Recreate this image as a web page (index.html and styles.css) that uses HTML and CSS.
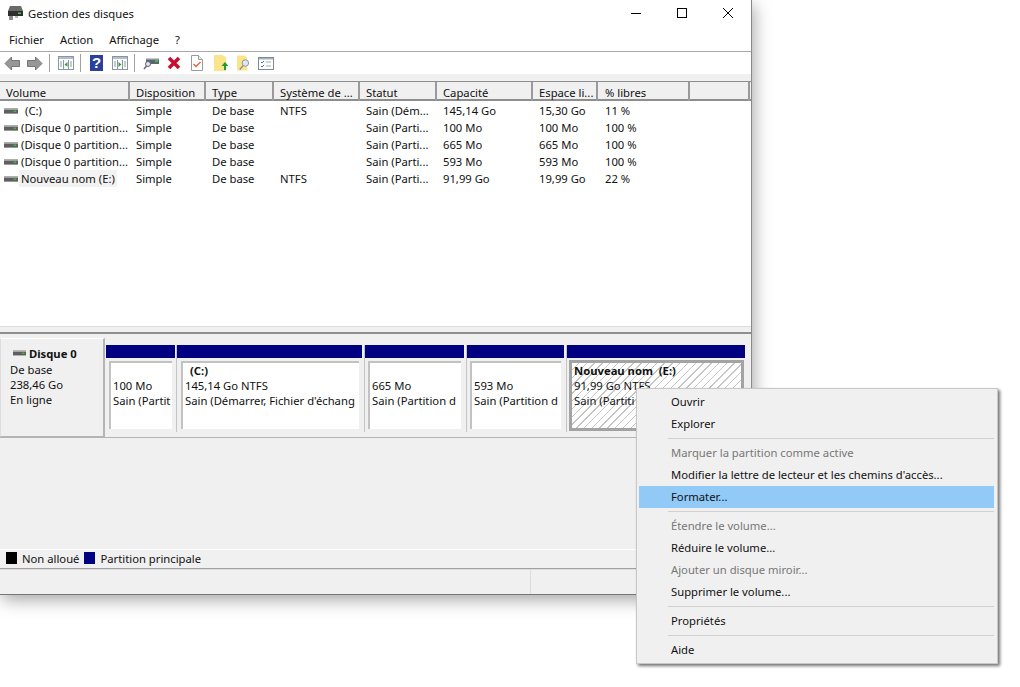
FILE: index.html
```html
<!DOCTYPE html>
<html lang="fr">
<head>
<meta charset="utf-8">
<title>Gestion des disques</title>
<link rel="stylesheet" href="styles.css">
</head>
<body>
<svg class="defs" width="0" height="0">
  <defs>
    <symbol id="drive" viewBox="0 0 16 6">
      <rect x="0" y="0" width="16" height="6" fill="#5f5f5f"/>
      <rect x="0" y="0" width="16" height="1.5" fill="#bdbdbd"/>
      <rect x="11" y="2.5" width="3" height="1.5" fill="#3fc43f"/>
    </symbol>
  </defs>
</svg>
<div class="window">
  <div class="titlebar">
    <svg class="appicon" width="17" height="16" viewBox="0 0 17 16"><path d="M3 1h11l2 5H1z" fill="#6a6a6a"/><rect x="1" y="6" width="15" height="5" fill="#2f2f2f"/><rect x="11" y="7.500" width="3" height="1.500" fill="#3fc43f"/><rect x="2" y="11" width="4" height="4" fill="#8d8d8d"/><rect x="8" y="11" width="3" height="2" fill="#b5b5b5"/></svg>
    <span class="title">Gestion des disques</span>
    <div class="winbtns">
      <svg width="46" height="28" viewBox="0 0 46 28"><path d="M18 13.500h10" stroke="#000" fill="none"/></svg>
      <svg width="46" height="28" viewBox="0 0 46 28"><rect x="18.500" y="8.500" width="9" height="9" stroke="#000" fill="none"/></svg>
      <svg width="46" height="28" viewBox="0 0 46 28"><path d="M18 8l10 10M28 8L18 18" stroke="#000" fill="none"/></svg>
    </div>
  </div>
  <div class="menubar"><span>Fichier</span><span>Action</span><span>Affichage</span><span>?</span></div>
  <div class="toolbar">
    <svg class="tool m7" width="16" height="15" viewBox="0 0 16 15"><path d="M7.500 1L1 7.500 7.500 14v-3.500h8v-6h-8z" fill="#979797" stroke="#777"/></svg>
    <svg class="tool m6" width="16" height="15" viewBox="0 0 16 15"><path d="M8.500 1L15 7.500 8.500 14v-3.500h-8v-6h8z" fill="#979797" stroke="#777"/></svg>
    <i class="tsep"></i>
    <svg class="tool m6" width="16" height="14" viewBox="0 0 16 14"><rect x=".5" y=".5" width="15" height="13" fill="#fff" stroke="#8a96a3"/><rect x="1" y="1" width="14" height="2" fill="#b5bec8"/><path d="M5.500 4v9M10.500 4v9" stroke="#8a96a3"/><path d="M9.500 6v5L6.500 8.500z" fill="#2e9e3e"/><path d="M2 6h2M2 8h2M2 10h2M12 6h2M12 8h2M12 10h2" stroke="#8a96a3"/></svg>
    <i class="tsep"></i>
    <svg class="tool m9" width="13" height="16" viewBox="0 0 13 16"><rect width="13" height="16" fill="#2b3f9e"/><text x="6.500" y="13" class="qmark">?</text></svg>
    <svg class="tool m6" width="16" height="14" viewBox="0 0 16 14"><rect x=".5" y=".5" width="15" height="13" fill="#fff" stroke="#8a96a3"/><rect x="1" y="1" width="14" height="2" fill="#b5bec8"/><path d="M5.500 4v9M10.500 4v9" stroke="#8a96a3"/><path d="M6.500 6v5l3-2.500z" fill="#2e9e3e"/><path d="M2 6h2M2 8h2M2 10h2M12 6h2M12 8h2M12 10h2" stroke="#8a96a3"/></svg>
    <i class="tsep"></i>
    <svg class="tool m8" width="16" height="14" viewBox="0 0 16 14"><rect x="3" y="2" width="13" height="6" fill="#5c6670"/><rect x="3" y="2" width="13" height="1.500" fill="#c4c9ce"/><rect x="12" y="4" width="3" height="2" fill="#37c437"/><circle cx="5" cy="8" r="2.500" fill="#dfe6ee" stroke="#667"/><path d="M3.500 10L1 13" stroke="#667" stroke-width="1.500"/></svg>
    <svg class="tool m10" width="14" height="14" viewBox="0 0 14 14"><path d="M2 2l10 10M12 2L2 12" stroke="#c8102e" stroke-width="3.600" fill="none"/></svg>
    <svg class="tool m11" width="12" height="16" viewBox="0 0 12 16"><path d="M.5.500h7l4 4v11H.5z" fill="#fff" stroke="#9a9a9a"/><path d="M7.500.500v4h4" fill="#eee" stroke="#9a9a9a"/><path d="M2.500 9l2.500 2.500L9.500 7" stroke="#e2603a" stroke-width="1.300" fill="none"/></svg>
    <svg class="tool m9" width="14" height="16" viewBox="0 0 14 16"><path d="M0 0h8l4 2v14H0z" fill="#fbe58a"/><path d="M10 15V11H7.500L11 7l3.500 4H12v4z" fill="#1f9d2f"/></svg>
    <svg class="tool m8" width="13" height="16" viewBox="0 0 14 16"><path d="M0 0h8l3 2v14H0z" fill="#fbe58a"/><circle cx="9" cy="8" r="3.500" fill="#dbe9f4" stroke="#8a8f95"/><path d="M6.500 11L3 15" stroke="#8a8f95" stroke-width="1.500"/></svg>
    <svg class="tool" width="16" height="13" viewBox="0 0 16 13"><rect x=".5" y=".5" width="15" height="12" fill="#fff" stroke="#808a94"/><rect x="1" y="1" width="14" height="1.500" fill="#aab3bc"/><path d="M3 5l1 1 2-2M3 9l1 1 2-2" stroke="#3878c8" fill="none"/><path d="M8 5h5M8 9h5" stroke="#9aa"/></svg>
  </div>
  <div class="band"></div>
  <div class="listview">
    <div class="row head">
      <div>Volume</div><div>Disposition</div><div>Type</div><div>Système de ...</div><div>Statut</div><div>Capacité</div><div>Espace li...</div><div>% libres</div><div></div>
    </div>
    <div class="rows">
      <div class="row"><div class="vol"><svg class="drv" width="14" height="6"><use href="#drive"/></svg><span class="vname sp">(C:)</span></div><div>Simple</div><div>De base</div><div>NTFS</div><div>Sain (Dém...</div><div>145,14 Go</div><div>15,30 Go</div><div>11 %</div><div></div></div>
      <div class="row"><div class="vol"><svg class="drv" width="14" height="6"><use href="#drive"/></svg><span class="vname">(Disque 0 partition...</span></div><div>Simple</div><div>De base</div><div></div><div>Sain (Parti...</div><div>100 Mo</div><div>100 Mo</div><div>100 %</div><div></div></div>
      <div class="row"><div class="vol"><svg class="drv" width="14" height="6"><use href="#drive"/></svg><span class="vname">(Disque 0 partition...</span></div><div>Simple</div><div>De base</div><div></div><div>Sain (Parti...</div><div>665 Mo</div><div>665 Mo</div><div>100 %</div><div></div></div>
      <div class="row"><div class="vol"><svg class="drv" width="14" height="6"><use href="#drive"/></svg><span class="vname">(Disque 0 partition...</span></div><div>Simple</div><div>De base</div><div></div><div>Sain (Parti...</div><div>593 Mo</div><div>593 Mo</div><div>100 %</div><div></div></div>
      <div class="row"><div class="vol"><svg class="drv" width="14" height="6"><use href="#drive"/></svg><span class="vname sel">Nouveau nom (E:)</span></div><div>Simple</div><div>De base</div><div>NTFS</div><div>Sain (Parti...</div><div>91,99 Go</div><div>19,99 Go</div><div>22 %</div><div></div></div>
    </div>
  </div>
  <div class="splitter"></div>
  <div class="graph">
    <div class="diskrow">
      <div class="disklabel">
        <div class="dname"><svg class="drv2" width="13" height="6"><use href="#drive"/></svg><b>Disque 0</b></div>
        <div>De base</div><div>238,46 Go</div><div>En ligne</div>
      </div>
      <div class="parts">
        <div class="part p1"><div class="bar"></div><div class="pbody"><div class="ptext"><p>&nbsp;</p><p>100 Mo</p><p>Sain (Partit</p></div></div></div>
        <div class="part p2"><div class="bar"></div><div class="pbody"><div class="ptext"><p class="cname"><b>(C:)</b></p><p>145,14 Go NTFS</p><p>Sain (Démarrer, Fichier d'échang</p></div></div></div>
        <div class="part p3"><div class="bar"></div><div class="pbody"><div class="ptext"><p>&nbsp;</p><p>665 Mo</p><p>Sain (Partition d</p></div></div></div>
        <div class="part p4"><div class="bar"></div><div class="pbody"><div class="ptext"><p>&nbsp;</p><p>593 Mo</p><p>Sain (Partition d</p></div></div></div>
        <div class="part p5 selected"><div class="bar"></div><div class="pbody"><div class="ptext"><p><b>Nouveau nom&nbsp; (E:)</b></p><p>91,99 Go NTFS</p><p>Sain (Partiti</p></div></div></div>
      </div>
    </div>
  </div>
  <div class="legend">
    <i class="sw black"></i><span>Non alloué</span><i class="sw navy"></i><span>Partition principale</span>
  </div>
  <div class="statusbar"><i></i><i></i></div>
</div>
<div class="ctx">
  <div class="mi">Ouvrir</div>
  <div class="mi">Explorer</div>
  <div class="ms"></div>
  <div class="mi off">Marquer la partition comme active</div>
  <div class="mi">Modifier la lettre de lecteur et les chemins d'accès...</div>
  <div class="mi hot">Formater...</div>
  <div class="ms"></div>
  <div class="mi off">Étendre le volume...</div>
  <div class="mi">Réduire le volume...</div>
  <div class="mi off">Ajouter un disque miroir...</div>
  <div class="mi">Supprimer le volume...</div>
  <div class="ms"></div>
  <div class="mi">Propriétés</div>
  <div class="ms"></div>
  <div class="mi">Aide</div>
</div>
</body>
</html>
```
FILE: styles.css
```css
* { box-sizing: border-box; }
html, body { margin: 0; padding: 0; background: #fff; }
body {
  width: 1020px; height: 687px; overflow: hidden; position: relative;
  font-family: "Noto Sans", "Open Sans", sans-serif;
  font-size: 11.25px; line-height: 17px; color: #111;
}
.defs { position: absolute; }
.window {
  width: 752px; height: 595px; display: flex; flex-direction: column;
  background: #f0f0f0; border-right: 1px solid #8a8a8a; border-bottom: 1px solid #777;
  box-shadow: 2px 5px 16px rgba(0,0,0,.35);
}
.titlebar { height: 28px; background: #fff; display: flex; align-items: center; padding: 0 0 2px 7px; flex: none; }
.appicon { margin-right: 4px; }
.title { flex: 1; }
.winbtns { display: flex; width: 138px; margin-top: 2px; }
.menubar { height: 24px; background: #fff; border-bottom: 1px solid #a9a9a9; display: flex; gap: 16px; padding: 3px 0 0 9px; flex: none; }
.toolbar { height: 22px; background: #fff; display: flex; align-items: center; padding-left: 4px; flex: none; }
.tool { flex: none; }
.m6 { margin-right: 6px; }
.m7 { margin-right: 7px; }
.m8 { margin-right: 8px; }
.m9 { margin-right: 9px; }
.m10 { margin-right: 10px; }
.m11 { margin-right: 11px; }
.tsep { width: 1px; height: 18px; background: #a0a0a0; margin-right: 8px; flex: none; }
.tsep + .m9 { margin-left: 1px; }
.qmark { font: bold 15px "Liberation Sans", sans-serif; fill: #fff; text-anchor: middle; }
.band { height: 7px; background: #f0f0f0; flex: none; }
.listview { height: 246px; background: #fff; flex: none; border-top: 1px solid #8e8e8e; border-bottom: 1px solid #dcdcdc; }
.row { display: grid; grid-template-columns: 130px 76px 68px 86px 77px 96px 65px 92px 60px; height: 17px; white-space: nowrap; }
.row > div { padding-left: 6px; overflow: hidden; }
.row > div:nth-child(8) { padding-left: 7px; }
.head { height: 19px; background: #f0f0f0; border-bottom: 2px solid #8e8e8e; }
.row.head > div { border-right: 2px solid #9a9a9a; padding-top: 2px; overflow: visible; }
.rows { padding-top: 1px; }
.row .vol { padding-left: 4px; display: flex; align-items: center; overflow: visible; }
.drv { margin-right: 1px; flex: none; }
.vname { padding: 0 2px; }
.vname.sp { padding-left: 6px; }
.vname.sel { background: #f2f2f2; }
.splitter { height: 7px; background: #f0f0f0; border-bottom: 2px solid #8e8e8e; flex: none; }
.graph { height: 215px; background: #f0f0f0; flex: none; }
.diskrow { display: flex; margin-top: 4px; height: 100px; border-bottom: 1px solid #b4b4b4; }
.disklabel { width: 105px; height: 99px; padding: 7px 0 0 9px; background: #f0f0f0; border-top: 1px solid #fff; border-left: 1px solid #ddd; border-right: 2px solid #b4b4b4; border-bottom: 1px solid #b4b4b4; line-height: 15px; }
.dname { display: flex; align-items: center; margin: 0 0 1px 3px; height: 15px; }
.drv2 { margin-right: 3px; position: relative; top: -1px; }
.parts { display: flex; margin-left: 1px; padding-top: 7px; }
.part { height: 87px; display: flex; flex-direction: column; flex: none; border-right: 1px solid #c4c4c4; }
.p1 { width: 71px; padding-right: 1px; }
.p2 { width: 188px; padding-right: 2px; }
.p3 { width: 102px; padding-right: 2px; }
.p4 { width: 100px; padding-right: 2px; }
.p5 { width: 178px; border-right: 0; }
.bar { height: 13px; background: #000080; flex: none; }
.pbody { height: 68px; margin: 3px 3px 0; background: #fff; border-left: 2px solid #c2c2c2; border-top: 2px solid #c2c2c2; padding: 0 0 0 2px; overflow: hidden; white-space: nowrap; line-height: 15px; }
.p2 .pbody { margin-left: 4px; }
.ptext p { margin: 0; }
.ptext .cname { padding-left: 5px; }
.selected .pbody { margin: 2px 1px 0 2px; border: 3px solid #a3a3a3; height: 71px; padding: 0 0 0 2px;
  background: repeating-linear-gradient(135deg, #fff 0, #fff 4.500px, #c6c6c6 4.500px, #c6c6c6 5.500px); }
.legend { height: 20px; background: #f0f0f0; border-top: 1px solid #fff; border-bottom: 1px solid #a0a0a0; display: flex; align-items: center; padding: 0 0 2px 6px; flex: none; }
.sw { width: 11px; height: 12px; margin-right: 5px; flex: none; }
.sw.black { background: #000; }
.sw.navy { background: #000080; margin-left: 5px; }
.statusbar { flex: 1; background: #f0f0f0; border-top: 1px solid #dedede; display: flex; padding-left: 530px; gap: 108px; }
.statusbar i { width: 1px; height: 100%; background: #dcdcdc; }
.ctx { position: absolute; left: 636px; top: 388px; width: 362px; height: 276px; background: #f0f0f0; border: 1px solid #c8c8c8; padding: 2px; box-shadow: 2px 2px 3px rgba(0,0,0,.55); }
.mi { height: 22px; line-height: 21px; padding-left: 32px; white-space: nowrap; width: 355px; }
.mi.off { color: #777; }
.mi.hot { background: #91c9f7; }
.ms { height: 1px; background: #d0d0d0; margin: 3px 0 3px 29px; width: 326px; }
```
